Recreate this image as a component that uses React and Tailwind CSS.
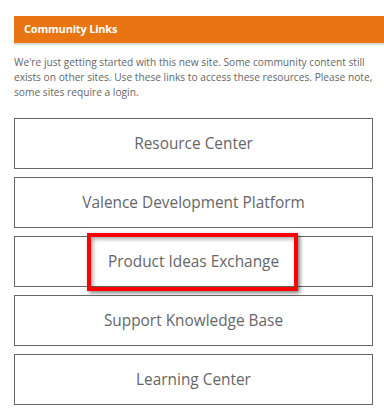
const links = [
  'Resource Center',
  'Valence Development Platform',
  'Product Ideas Exchange',
  'Support Knowledge Base',
  'Learning Center',
];

export default function App() {
  return (
    <div className="w-[384px] h-[418px] bg-white pt-4 pl-[14px] overflow-hidden" style={{ fontFamily: '"Open Sans", sans-serif' }}>
      <div className="h-[29px] bg-[#e87512] border-b-2 border-[#d9d9d9] pl-[10px] flex items-center">
        <span className="text-white text-[11px] font-bold tracking-[-0.2px]">Community Links</span>
      </div>
      <p className="mt-[10px] text-[10.2px] leading-[15px] text-[#666]">
        We're just getting started with this new site. Some community content still exists on other sites. Use these links to access these resources. Please note, some sites require a login.
      </p>
      <div className="mt-[18px] w-[359px] flex flex-col gap-2">
        {links.map((label, i) => (
          <div key={label} className="relative h-[51px] border-[1.5px] border-[#666] flex items-center justify-center">
            <span className="text-[15.4px] text-[#666]">{label}</span>
            {i === 2 && (
              <div className="absolute left-[71.5px] top-[-4px] w-[211px] h-[58px] border-[4px] border-[#ff0000] shadow-[2px_2px_4px_rgba(0,0,0,0.5),inset_2px_2px_4px_rgba(0,0,0,0.35)]" />
            )}
          </div>
        ))}
      </div>
    </div>
  );
}
